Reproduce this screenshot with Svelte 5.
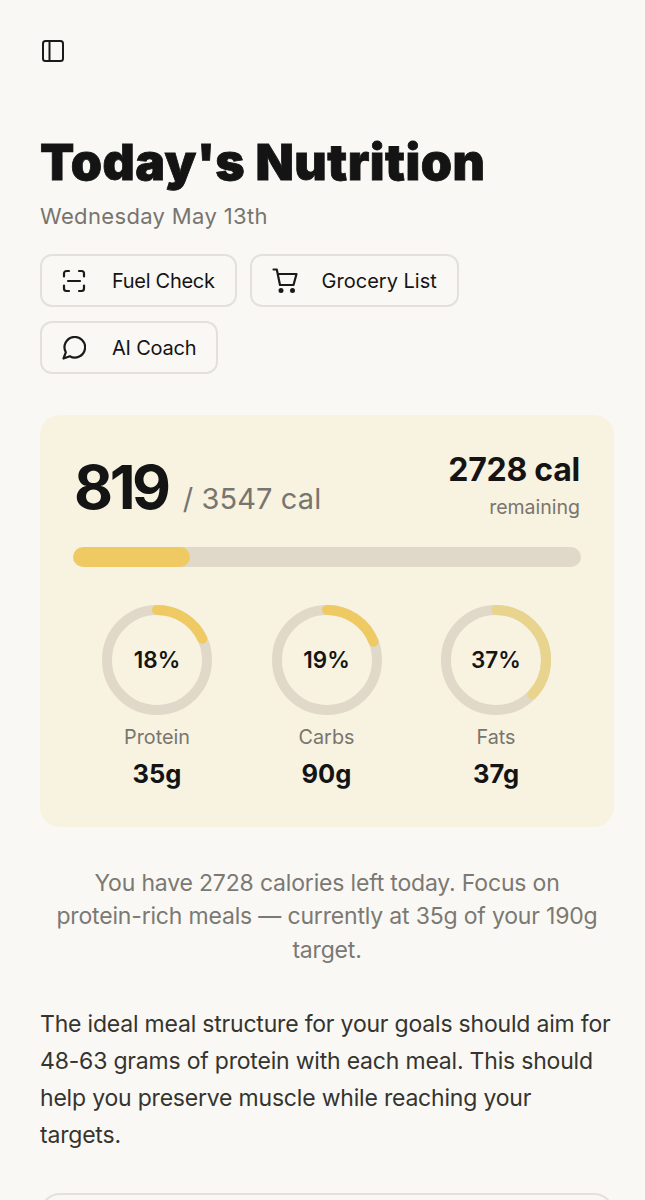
<script>
  const macros = [
    { pct: 18, label: 'Protein', value: '35g', color: '#efca62' },
    { pct: 19, label: 'Carbs', value: '90g', color: '#efca62' },
    { pct: 37, label: 'Fats', value: '37g', color: '#e8d48c' }
  ];
  const r = 50;
  const c = 2 * Math.PI * r;
</script>

<div class="page">
  <button class="menu" aria-label="Toggle sidebar">
    <svg width="24" height="24" viewBox="0 0 24 24" fill="none" stroke="#1a1a1a" stroke-width="2" stroke-linejoin="round"><rect x="3" y="1" width="20" height="20" rx="2.500"/><path d="M9.500 1v20"/></svg>
  </button>

  <h1>Today's Nutrition</h1>
  <p class="date">Wednesday May 13th</p>

  <div class="actions">
    <button class="action tight">
      <span class="icon"><svg width="24" height="24" viewBox="0 0 24 24" fill="none" stroke="#1a1a1a" stroke-width="2.200" stroke-linecap="round" stroke-linejoin="round"><path d="M2 7.500V4.500a2.500 2.500 0 0 1 2.500-2.500H7M17 2h2.500a2.500 2.500 0 0 1 2.500 2.500v3M22 16.500v3a2.500 2.500 0 0 1-2.500 2.500H17M7 22H4.500A2.500 2.500 0 0 1 2 19.500v-3M6 12h12"/></svg></span>
      <span>Fuel Check</span>
    </button>
    <button class="action wide">
      <span class="icon"><svg width="26" height="26" viewBox="0 0 26 26" fill="none" stroke="#1a1a1a" stroke-width="2.200" stroke-linecap="round" stroke-linejoin="round"><path d="M1.500 1.500h3.300l3.200 15.500h13.500l3-11H6"/><circle cx="9" cy="22.500" r="1.400" fill="#1a1a1a"/><circle cx="20.500" cy="22.500" r="1.400" fill="#1a1a1a"/></svg></span>
      <span>Grocery List</span>
    </button>
    <button class="action">
      <span class="icon"><svg width="24" height="24" viewBox="0 0 24 24" fill="none" stroke="#1a1a1a" stroke-width="2.200" stroke-linecap="round" stroke-linejoin="round"><path d="M1.500 22.500l2.300-6.200A10.300 10.300 0 1 1 7.800 20.300z"/></svg></span>
      <span>AI Coach</span>
    </button>
  </div>

  <section class="card">
    <div class="totals">
      <div class="eaten"><span class="big">819</span><span class="goal">/ 3547 cal</span></div>
      <div class="left"><div class="rem">2728 cal</div><div class="remlabel">remaining</div></div>
    </div>
    <div class="track"><div class="fill" style="width: {(819 / 3547) * 100}%"></div></div>
    <div class="macros">
      {#each macros as m}
        <div class="macro">
          <div class="ring">
            <svg width="110" height="110" viewBox="0 0 110 110" fill="none">
              <circle cx="55" cy="55" r={r} stroke="#e0d9c9" stroke-width="10"/>
              <circle cx="55" cy="55" r={r} stroke={m.color} stroke-width="10" stroke-linecap="round" stroke-dasharray="{(m.pct / 100) * c} {c}" transform="rotate(-90 55 55)"/>
            </svg>
            <span class="pct">{m.pct}%</span>
          </div>
          <div class="label">{m.label}</div>
          <div class="value">{m.value}</div>
        </div>
      {/each}
    </div>
  </section>

  <p class="summary">You have 2728 calories left today. Focus on protein-rich meals — currently at 35g of your 190g target.</p>
  <p class="body">The ideal meal structure for your goals should aim for 48-63 grams of protein with each meal. This should help you preserve muscle while reaching your targets.</p>
  <div class="next"></div>
</div>

<style>
  :global(body) { background: #faf8f4; }
  .page {
    height: 1200px;
    overflow: hidden;
    box-sizing: border-box;
    padding: 40px 31px 0 40px;
    font-family: "Inter", "Noto Sans", sans-serif;
    color: #141414;
    background: #faf8f4;
  }
  button { font: inherit; color: inherit; background: none; }
  .menu { display: block; border: 0; padding: 0; height: 24px; }
  .menu svg { display: block; }
  h1 {
    margin: 68px 0 0;
    font-family: "Inter", sans-serif;
    font-weight: 900;
    font-size: 50px;
    line-height: 60px;
    letter-spacing: 0.45px;
    -webkit-text-stroke: 0.8px #141414;
    white-space: nowrap;
  }
  .date { margin: 9px 0 0; font-size: 22px; line-height: 30px; letter-spacing: 0.35px; color: #77756f; }
  .actions { display: flex; flex-wrap: wrap; gap: 14px 13px; margin-top: 23px; }
  .action {
    display: flex; align-items: center; gap: 24px;
    box-sizing: border-box; height: 53px; padding: 0 20px;
    border: 2px solid #e3e1da; border-radius: 12px; font-size: 20px; letter-spacing: -0.2px; white-space: nowrap;
  }
  .tight { letter-spacing: -0.3px; }
  .wide { letter-spacing: 0; }
  .icon { display: flex; width: 26px; }
  .card {
    margin-top: 41px; height: 412px; box-sizing: border-box;
    padding: 36px 33px 0; background: #f8f2e0; border-radius: 20px;
  }
  .totals { display: flex; justify-content: space-between; align-items: flex-start; height: 96px; }
  .eaten { display: flex; align-items: baseline; gap: 15px; padding-left: 1px; }
  .big { font-size: 60px; line-height: 72px; font-weight: 700; letter-spacing: -3.4px; }
  .goal { font-size: 29px; letter-spacing: 0.1px; color: #77756f; }
  .left { text-align: right; padding-right: 1px; }
  .rem { font-size: 32px; line-height: 38px; font-weight: 700; letter-spacing: -0.25px; }
  .remlabel { font-size: 19.5px; line-height: 28px; color: #77756f; margin-top: 4px; }
  .track { height: 20px; border-radius: 10px; background: #e0d9c9; overflow: hidden; }
  .fill { height: 100%; border-radius: 10px; background: #efca62; }
  .macros { display: flex; justify-content: space-between; margin-top: 38px; padding: 0 30px 0 29px; }
  .macro { width: 110px; display: flex; flex-direction: column; align-items: center; }
  .ring { position: relative; width: 110px; height: 110px; }
  .ring svg { display: block; }
  .pct { position: absolute; inset: 0 0 2px; display: flex; align-items: center; justify-content: center; font-size: 22.500px; font-weight: 600; }
  .label { margin-top: 8px; font-size: 19.8px; line-height: 28px; color: #77756f; }
  .value { margin-top: 6px; font-size: 25.5px; line-height: 34px; font-weight: 700; }
  .summary { margin: 40px 10px 0; text-align: center; font-size: 23px; line-height: 33.400px; letter-spacing: -0.18px; color: #7b7973; }
  .body { margin: 39px 0 0; font-size: 23px; line-height: 37px; letter-spacing: -0.2px; color: #35342f; }
  .next { margin-top: 39px; height: 80px; border: 2px solid #e3e1da; border-radius: 20px; box-sizing: border-box; }
</style>
